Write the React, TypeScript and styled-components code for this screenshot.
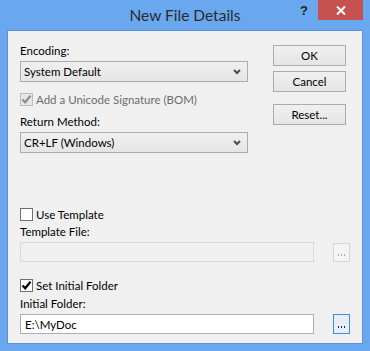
import styled, { createGlobalStyle } from 'styled-components';

const GlobalStyle = createGlobalStyle`
  html, body {
    margin: 0;
    padding: 0;
    background: #69a8ef;
  }
  body {
    font-family: 'Segoe UI', Lato, 'Noto Sans', sans-serif;
    font-size: 11.5px;
    color: #000;
  }
`;

const Window = styled.div`
  width: 370px;
  height: 351px;
  background: #69a8ef;
  display: flex;
  flex-direction: column;
`;

const TitleBar = styled.div`
  height: 30px;
  display: grid;
  grid-template-columns: 1fr auto 1fr;
  align-items: start;
`;

const Title = styled.div`
  grid-column: 2;
  padding-top: 6px;
  font-size: 15.5px;
  line-height: 18px;
  color: #2b2b2b;
`;

const Controls = styled.div`
  grid-column: 3;
  justify-self: end;
  display: flex;
  margin-right: 7px;
`;

const HelpButton = styled.div`
  width: 28px;
  height: 20px;
  display: flex;
  align-items: center;
  justify-content: center;
  font-family: 'Liberation Sans', sans-serif;
  font-weight: bold;
  font-size: 13px;
  color: #1e1e1e;
`;

const CloseButton = styled.div`
  width: 45px;
  height: 20px;
  background: #c75050;
  display: flex;
  align-items: center;
  justify-content: center;
`;

const Client = styled.div`
  flex: 1;
  margin: 0 7px 7px;
  border: 1px solid #5a95dc;
  background: #f0f0f0;
  display: flex;
  flex-direction: column;
  padding: 0 11px 0 12px;
`;

const TopSection = styled.div`
  display: flex;
  gap: 25px;
`;

const FormColumn = styled.div`
  width: 228px;
  padding-top: 12px;
  display: flex;
  flex-direction: column;
`;

const ButtonColumn = styled.div`
  padding-top: 14px;
  display: flex;
  flex-direction: column;
  gap: 5px;
`;

const Label = styled.div<{ $top?: number }>`
  line-height: 15px;
  height: 15px;
  margin-top: ${({ $top }) => $top ?? 0}px;
  margin-bottom: 3px;
  white-space: nowrap;
`;

const Combo = styled.div`
  height: 21px;
  box-sizing: border-box;
  border: 1px solid #acacac;
  background: linear-gradient(#f0f0f0, #e5e5e5);
  display: flex;
  align-items: center;
  justify-content: space-between;
  padding: 0 6px 0 3px;
  line-height: 15px;
`;

const Chevron = () => (
  <svg width="8" height="6" viewBox="0 0 8 6">
    <path d="M1 1 L4 4 L7 1" fill="none" stroke="#4a4a4a" strokeWidth="2" />
  </svg>
);

const CheckRow = styled.label<{ $top: number; $disabled?: boolean }>`
  display: flex;
  align-items: center;
  gap: 3px;
  height: 15px;
  margin-top: ${({ $top }) => $top}px;
  line-height: 15px;
  color: ${({ $disabled }) => ($disabled ? '#6d6d6d' : '#000')};
  white-space: nowrap;
`;

const Box = styled.span<{ $disabled?: boolean }>`
  width: 13px;
  height: 13px;
  box-sizing: border-box;
  border: 1px solid ${({ $disabled }) => ($disabled ? '#bcbcbc' : '#707070')};
  background: ${({ $disabled }) => ($disabled ? '#e6e6e6' : '#fff')};
  display: flex;
  align-items: center;
  justify-content: center;
`;

const Check = ({ color }: { color: string }) => (
  <svg width="11" height="11" viewBox="0 0 11 11">
    <path d="M1.5 5.5 L4.2 8.3 L9.5 1.8" fill="none" stroke={color} strokeWidth="2.2" />
  </svg>
);

const Button = styled.div<{ $top?: number }>`
  width: 73px;
  height: 21px;
  box-sizing: border-box;
  border: 1px solid #acacac;
  background: linear-gradient(#f0f0f0, #e5e5e5);
  display: flex;
  align-items: center;
  justify-content: center;
  margin-top: ${({ $top }) => $top ?? 0}px;
`;

const BottomSection = styled.div`
  display: flex;
  flex-direction: column;
  padding-top: 54px;
`;

const FieldRow = styled.div`
  display: flex;
  align-items: center;
  gap: 19px;
`;

const TextBox = styled.div<{ $disabled?: boolean }>`
  width: 294px;
  height: 20px;
  box-sizing: border-box;
  border: 1px solid ${({ $disabled }) => ($disabled ? '#d9d9d9' : '#abadb3')};
  background: ${({ $disabled }) => ($disabled ? '#f0f0f0' : '#fff')};
  padding: 0 4px;
  display: flex;
  align-items: center;
`;

const Browse = styled.div<{ $disabled?: boolean; $focused?: boolean }>`
  width: 17px;
  height: ${({ $focused }) => ($focused ? 20 : 19)}px;
  box-sizing: border-box;
  border: 1px solid
    ${({ $disabled, $focused }) => ($disabled ? '#d5d5d5' : $focused ? '#3c8fe0' : '#acacac')};
  background: ${({ $disabled }) => ($disabled ? '#f4f4f4' : '#e8eef5')};
  display: flex;
  align-items: flex-end;
  justify-content: center;
  padding-bottom: 5px;
  gap: 2px;
`;

const Dot = styled.span<{ $disabled?: boolean }>`
  width: 1px;
  height: 2px;
  background: ${({ $disabled }) => ($disabled ? '#a9a9a9' : '#2a1f66')};
`;

const Dots = ({ disabled }: { disabled?: boolean }) => (
  <>
    <Dot $disabled={disabled} />
    <Dot $disabled={disabled} />
    <Dot $disabled={disabled} />
  </>
);

export default function App() {
  return (
    <>
      <GlobalStyle />
      <Window>
        <TitleBar>
          <Title>New File Details</Title>
          <Controls>
            <HelpButton>?</HelpButton>
            <CloseButton>
              <svg width="10" height="9" viewBox="0 0 10 9">
                <path d="M1 0.5 L9 8.5 M9 0.5 L1 8.5" stroke="#fff" strokeWidth="2" />
              </svg>
            </CloseButton>
          </Controls>
        </TitleBar>
        <Client>
          <TopSection>
            <FormColumn>
              <Label>Encoding:</Label>
              <Combo>
                <span>System Default</span>
                <Chevron />
              </Combo>
              <CheckRow $top={10} $disabled>
                <Box $disabled>
                  <Check color="#8f8f8f" />
                </Box>
                Add a Unicode Signature (BOM)
              </CheckRow>
              <Label $top={7}>Return Method:</Label>
              <Combo>
                <span>CR+LF (Windows)</span>
                <Chevron />
              </Combo>
            </FormColumn>
            <ButtonColumn>
              <Button>OK</Button>
              <Button>Cancel</Button>
              <Button $top={7}>Reset...</Button>
            </ButtonColumn>
          </TopSection>
          <BottomSection>
            <CheckRow $top={0}>
              <Box />
              Use Template
            </CheckRow>
            <Label $top={2}>Template File:</Label>
            <FieldRow>
              <TextBox $disabled />
              <Browse $disabled>
                <Dots disabled />
              </Browse>
            </FieldRow>
            <CheckRow $top={16}>
              <Box>
                <Check color="#000" />
              </Box>
              Set Initial Folder
            </CheckRow>
            <Label $top={3}>Initial Folder:</Label>
            <FieldRow>
              <TextBox>E:\MyDoc</TextBox>
              <Browse $focused>
                <Dots />
              </Browse>
            </FieldRow>
          </BottomSection>
        </Client>
      </Window>
    </>
  );
}
